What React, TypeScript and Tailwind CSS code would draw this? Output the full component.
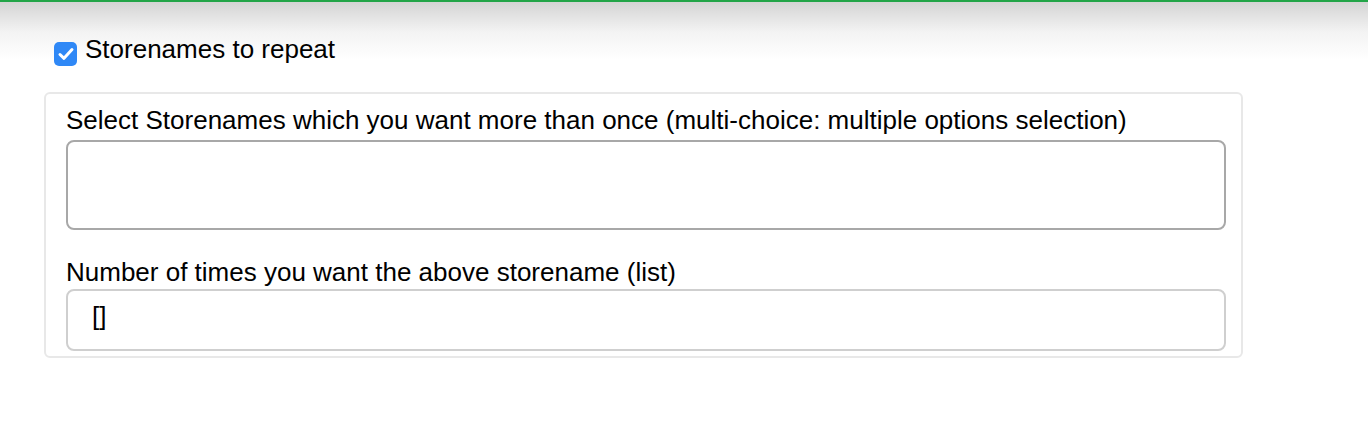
import React from "react";

export default function App() {
  return (
    <div className="min-h-[426px] bg-white font-['Liberation_Sans',Helvetica,Arial,sans-serif] text-black">
      <div className="h-[2px] bg-[#23a548]" />
      <div className="bg-[linear-gradient(to_bottom,#d4d4d4,#f3f3f3_30px,#ffffff_58px)] bg-no-repeat pl-[44px] pt-[40px]">
        <label className="flex items-start gap-[8px] pl-[10px]">
          <span className="flex h-[24px] w-[23px] items-center justify-center rounded-[5px] bg-[#2f88f6]">
            <svg width="18" height="16" viewBox="0 0 18 16" fill="none">
              <path d="M3 8.5 L7 12.3 L15 3.5" stroke="#ffffff" strokeWidth="3" strokeLinecap="round" strokeLinejoin="round" />
            </svg>
          </span>
          <span className="-mt-[3px] text-[26px] leading-[20px]">Storenames to repeat</span>
        </label>
        <div className="mt-[26px] w-[1199px] rounded-[6px] border-2 border-[#e8e8e8] bg-white pl-[20px] pr-[15px] pt-[11px] pb-[5px]">
          <div className="text-[26px] leading-[30px]">
            Select Storenames which you want more than once (multi-choice: multiple options selection)
          </div>
          <div className="mt-[5px] h-[90px] w-[1160px] rounded-[8px] border-2 border-[#a8a8a8] bg-white" />
          <div className="mt-[27px] text-[26px] leading-[30px]">
            Number of times you want the above storename (list)
          </div>
          <div className="mt-[2px] flex h-[62px] w-[1160px] items-center rounded-[8px] border-2 border-[#cfcfcf] bg-white pb-[8px] pl-[24px] text-[26px]">
            []
          </div>
        </div>
      </div>
    </div>
  );
}
